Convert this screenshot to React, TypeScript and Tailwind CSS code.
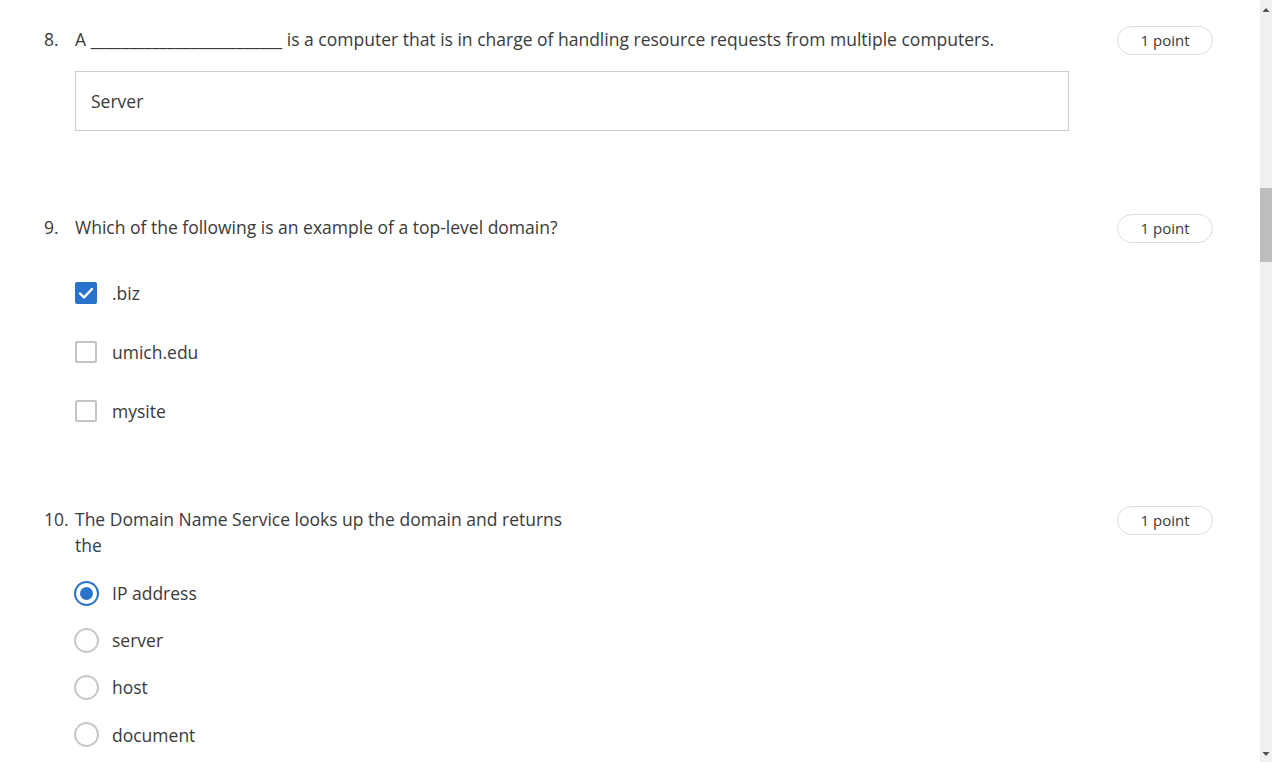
const FONT = "font-['Open_Sans',_'Liberation_Sans',_sans-serif]";

function PointPill() {
  return (
    <div className="shrink-0 w-[96px] h-[29px] rounded-full border border-[#dcdcdc] flex items-center justify-center text-[15px] text-[#3a3a3a]">
      1 point
    </div>
  );
}

function QuestionHead({ num, children }: { num: string; children: React.ReactNode }) {
  return (
    <div className="flex items-start justify-between">
      <div className="flex text-[17.5px] leading-[26px] text-[#3a3a3a]">
        <span className="w-[31px] shrink-0">{num}</span>
        <div>{children}</div>
      </div>
      <PointPill />
    </div>
  );
}

function Checkbox({ checked, label }: { checked?: boolean; label: string }) {
  return (
    <div className="flex items-center h-6">
      {checked ? (
        <span className="w-[22px] h-[22px] rounded-[2px] bg-[#2a73cc] flex items-center justify-center">
          <svg width="18" height="18" viewBox="0 0 18 18" fill="none">
            <path d="M3 9.5l4 3.8L15 5" stroke="white" strokeWidth="2.4" strokeLinecap="round" strokeLinejoin="round" />
          </svg>
        </span>
      ) : (
        <span className="w-[22px] h-[22px] rounded-[2px] border-2 border-[#c4c4c4] bg-white" />
      )}
      <span className="ml-[15px] text-[17.5px] text-[#3a3a3a]">{label}</span>
    </div>
  );
}

function Radio({ checked, label }: { checked?: boolean; label: string }) {
  return (
    <div className="flex items-center h-6">
      <span
        className={`-ml-px w-[25px] h-[25px] rounded-full border-2 flex items-center justify-center ${
          checked ? 'border-[#2a73cc]' : 'border-[#c8c8c8]'
        }`}
      >
        {checked && <span className="w-[13px] h-[13px] rounded-full bg-[#2a73cc]" />}
      </span>
      <span className="ml-[13px] text-[17.5px] text-[#3a3a3a]">{label}</span>
    </div>
  );
}

export default function App() {
  return (
    <div className={`${FONT} w-[1272px] h-[762px] overflow-hidden flex bg-white`}>
      <div className="flex-1 pl-[44px] pr-[47px] pt-[26px]">
        {/* Question 8 */}
        <QuestionHead num="8.">
          A _________________________ is a computer that is in charge of handling resource requests from multiple computers.
        </QuestionHead>
        <div className="ml-[31px] mt-[16px] w-[994px] h-[60px] border border-[#cbcbd6] flex items-center px-[15px] text-[17.5px] text-[#3a3a3a]">
          Server
        </div>

        {/* Question 9 */}
        <div className="mt-[83px]">
          <QuestionHead num="9.">Which of the following is an example of a top-level domain?</QuestionHead>
          <div className="ml-[31px] mt-[38px] flex flex-col gap-[35px]">
            <Checkbox checked label=".biz" />
            <Checkbox label="umich.edu" />
            <Checkbox label="mysite" />
          </div>
        </div>

        {/* Question 10 */}
        <div className="mt-[83px]">
          <QuestionHead num="10.">
            <div className="w-[500px]">The Domain Name Service looks up the domain and returns the</div>
          </QuestionHead>
          <div className="ml-[31px] mt-[23px] flex flex-col gap-[23.3px]">
            <Radio checked label="IP address" />
            <Radio label="server" />
            <Radio label="host" />
            <Radio label="document" />
          </div>
        </div>
      </div>

      {/* Scrollbar */}
      <div className="w-[12px] h-full bg-[#f0f0f0] flex flex-col items-center">
        <svg width="8" height="12" viewBox="0 0 8 12" className="mt-[4px]">
          <path d="M0.5 8 L4 4 L7.5 8 Z" fill="#505050" />
        </svg>
        <div className="mt-[172px] w-full h-[74px] bg-[#bdbdbd]" />
        <div className="flex-1" />
        <svg width="8" height="12" viewBox="0 0 8 12" className="mb-[2px]">
          <path d="M0.5 4 L4 8 L7.5 4 Z" fill="#505050" />
        </svg>
      </div>
    </div>
  );
}
